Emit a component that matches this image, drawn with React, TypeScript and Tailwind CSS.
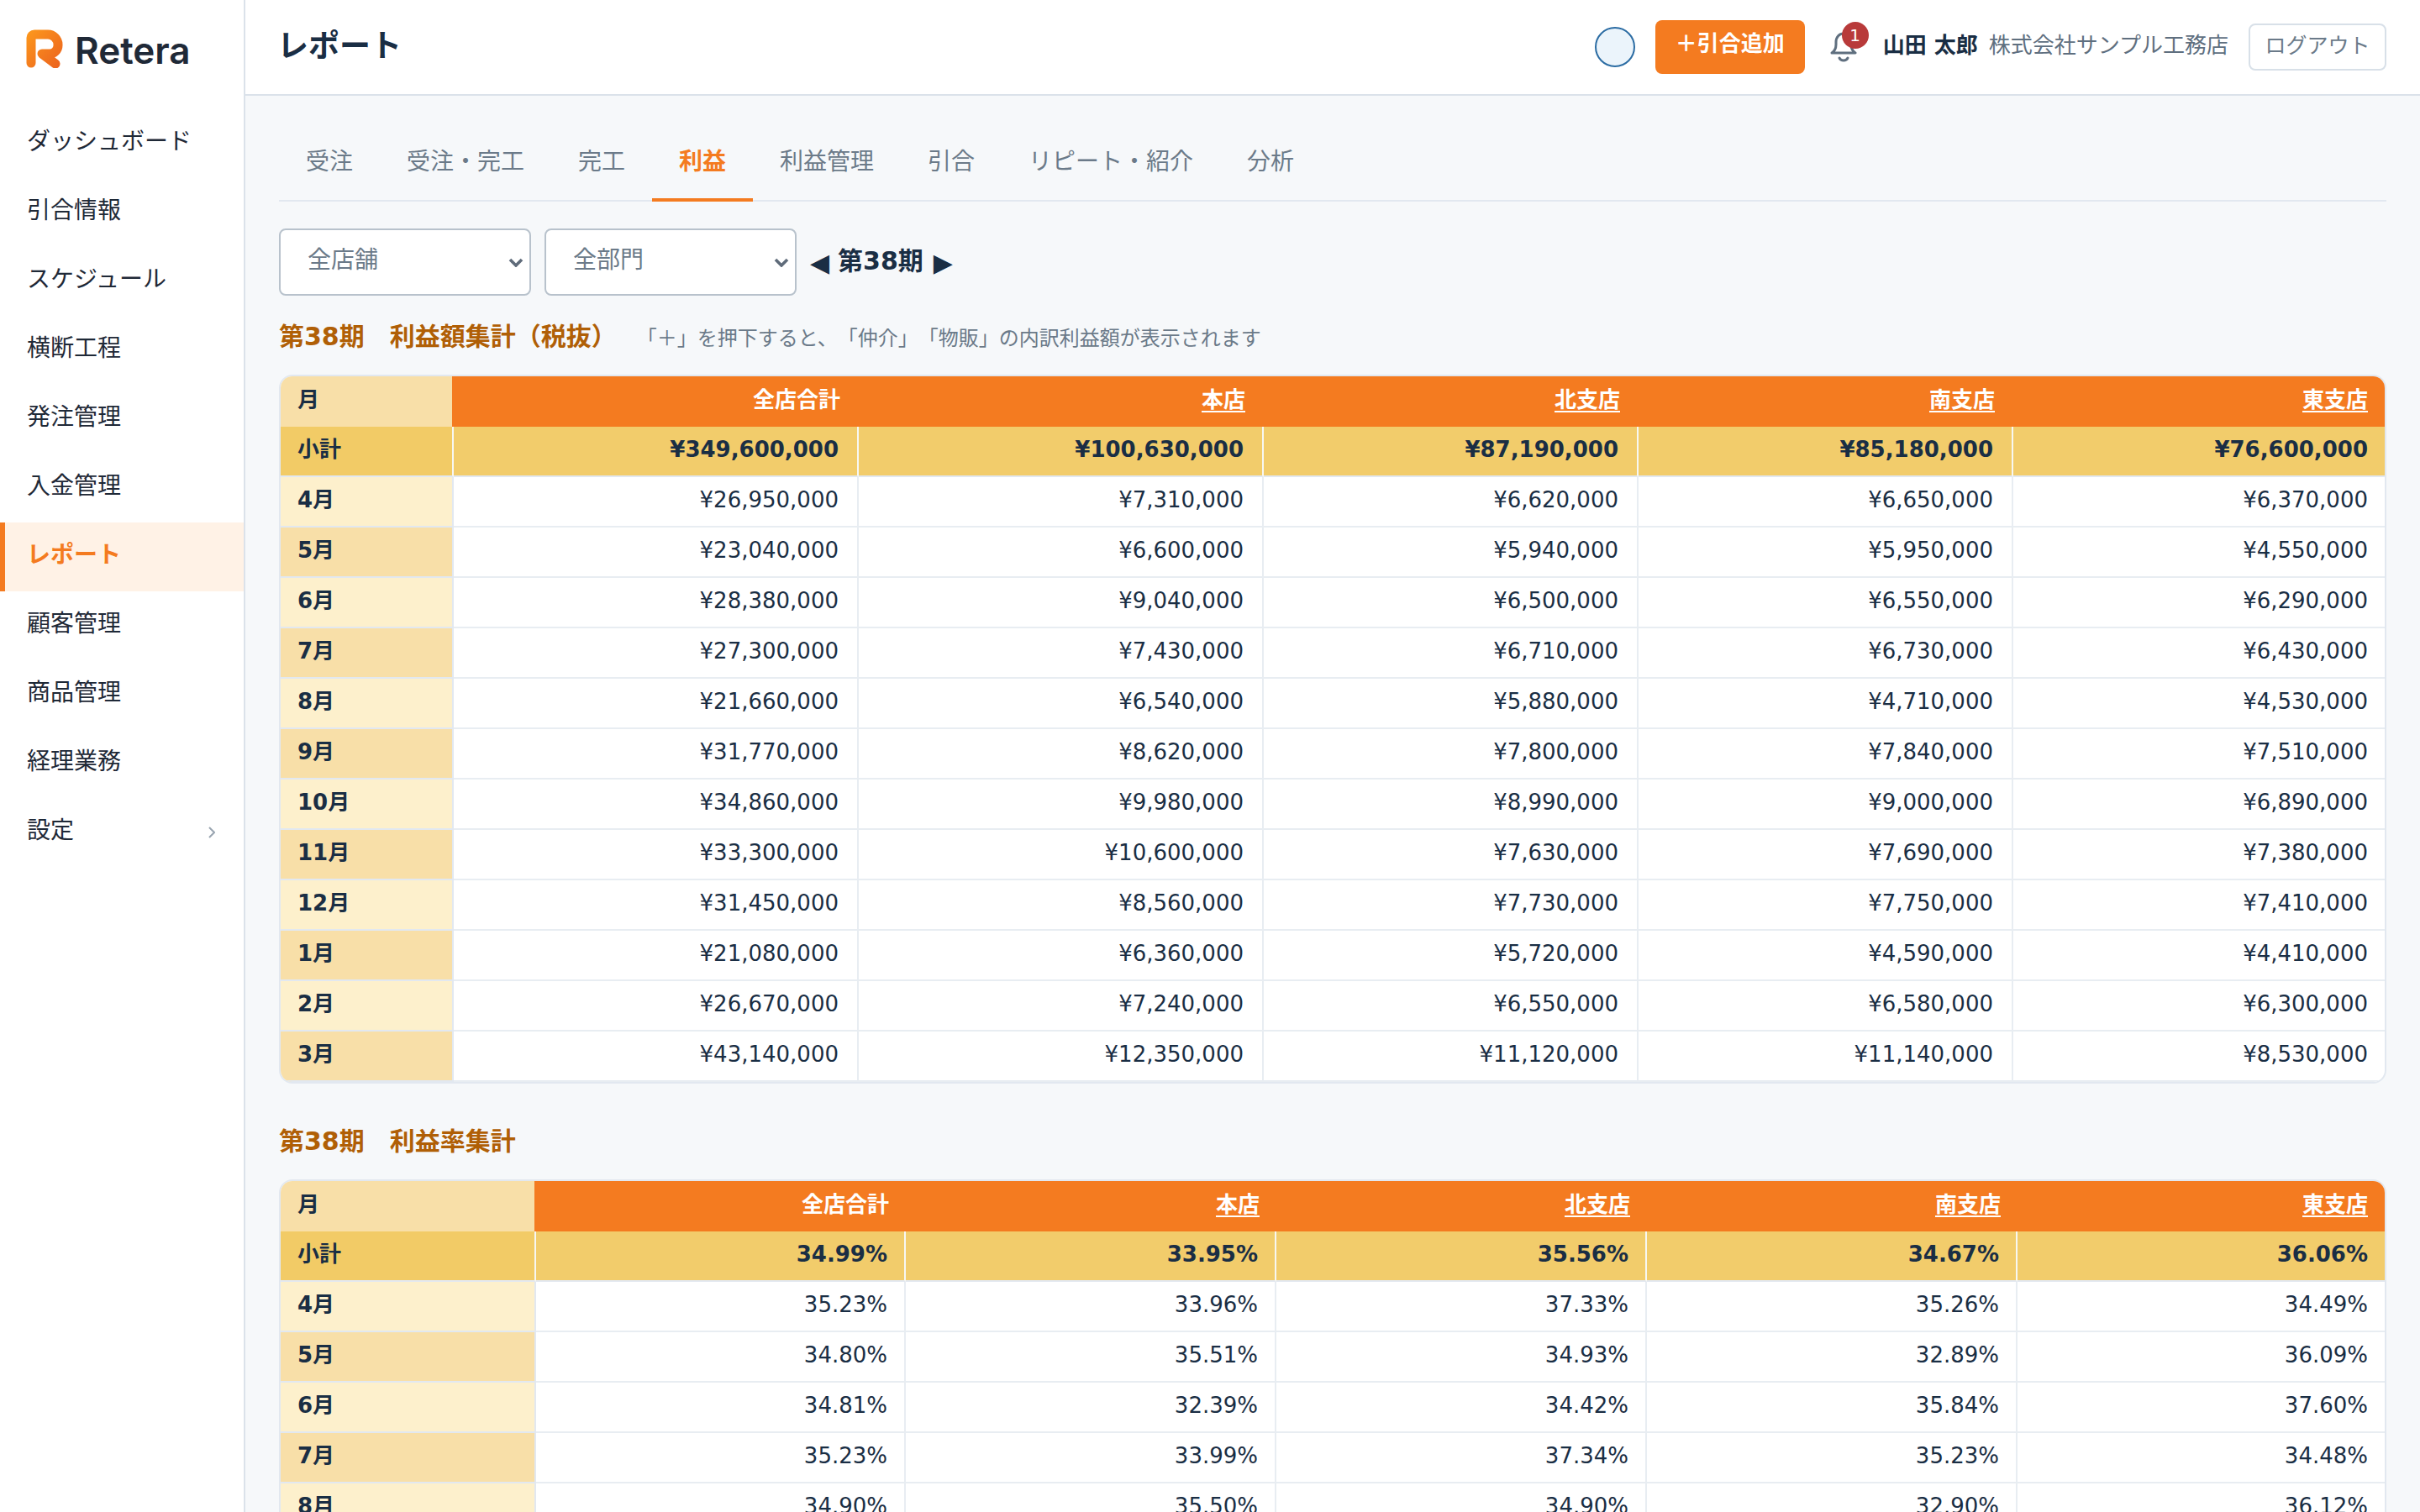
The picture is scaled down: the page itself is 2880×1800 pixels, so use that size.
import React from "react";

const navItems = ["ダッシュボード", "引合情報", "スケジュール", "横断工程", "発注管理", "入金管理", "レポート", "顧客管理", "商品管理", "経理業務", "設定"];
const tabs = ["受注", "受注・完工", "完工", "利益", "利益管理", "引合", "リピート・紹介", "分析"];
const shops = ["全店合計", "本店", "北支店", "南支店", "東支店"];

const amountTotals = ["¥349,600,000", "¥100,630,000", "¥87,190,000", "¥85,180,000", "¥76,600,000"];
const amountRows: [string, string[]][] = [
  ["4月", ["¥26,950,000", "¥7,310,000", "¥6,620,000", "¥6,650,000", "¥6,370,000"]],
  ["5月", ["¥23,040,000", "¥6,600,000", "¥5,940,000", "¥5,950,000", "¥4,550,000"]],
  ["6月", ["¥28,380,000", "¥9,040,000", "¥6,500,000", "¥6,550,000", "¥6,290,000"]],
  ["7月", ["¥27,300,000", "¥7,430,000", "¥6,710,000", "¥6,730,000", "¥6,430,000"]],
  ["8月", ["¥21,660,000", "¥6,540,000", "¥5,880,000", "¥4,710,000", "¥4,530,000"]],
  ["9月", ["¥31,770,000", "¥8,620,000", "¥7,800,000", "¥7,840,000", "¥7,510,000"]],
  ["10月", ["¥34,860,000", "¥9,980,000", "¥8,990,000", "¥9,000,000", "¥6,890,000"]],
  ["11月", ["¥33,300,000", "¥10,600,000", "¥7,630,000", "¥7,690,000", "¥7,380,000"]],
  ["12月", ["¥31,450,000", "¥8,560,000", "¥7,730,000", "¥7,750,000", "¥7,410,000"]],
  ["1月", ["¥21,080,000", "¥6,360,000", "¥5,720,000", "¥4,590,000", "¥4,410,000"]],
  ["2月", ["¥26,670,000", "¥7,240,000", "¥6,550,000", "¥6,580,000", "¥6,300,000"]],
  ["3月", ["¥43,140,000", "¥12,350,000", "¥11,120,000", "¥11,140,000", "¥8,530,000"]],
];

const rateTotals = ["34.99%", "33.95%", "35.56%", "34.67%", "36.06%"];
const rateRows: [string, string[]][] = [
  ["4月", ["35.23%", "33.96%", "37.33%", "35.26%", "34.49%"]],
  ["5月", ["34.80%", "35.51%", "34.93%", "32.89%", "36.09%"]],
  ["6月", ["34.81%", "32.39%", "34.42%", "35.84%", "37.60%"]],
  ["7月", ["35.23%", "33.99%", "37.34%", "35.23%", "34.48%"]],
  ["8月", ["34.90%", "35.50%", "34.90%", "32.90%", "36.12%"]],
];

const LogoMark = () => (
  <svg width="44" height="46" viewBox="0 0 44 46" fill="none">
    <defs>
      <linearGradient id="logoGrad" x1="0" y1="0" x2="44" y2="40" gradientUnits="userSpaceOnUse">
        <stop offset="0" stopColor="#fd9a1c" />
        <stop offset="1" stopColor="#ec641f" />
      </linearGradient>
    </defs>
    <path d="M6 40V10a4 4 0 0 1 4-4h16a12 12 0 0 1 12 12v1a10 10 0 0 1-10 10H19l16 12" stroke="url(#logoGrad)" strokeWidth="11" strokeLinecap="round" strokeLinejoin="round" />
  </svg>
);

const BellIcon = () => (
  <svg width="32" height="38" viewBox="0 0 32 38" fill="none" stroke="#5f6f7f" strokeWidth="3">
    <path d="M2 26c3-2 5-5 5-10v-3C7 7 11 3 16 3s9 4 9 10v3c0 5 2 8 5 10z" strokeLinejoin="round" />
    <path d="M11 32c1 2 3 3 5 3s4-1 5-3" strokeLinecap="round" />
  </svg>
);

const StoreSelect = ({ label }: { label: string }) => (
  <div className="relative w-[300px] h-20">
    <select className="w-full h-full appearance-none rounded-lg border-2 border-[#b8c2cc] bg-white pl-8 pb-1 text-[28px] text-[#6b7a89]">
      <option>{label}</option>
    </select>
    <svg className="absolute right-[9px] top-[35px]" width="18" height="11" viewBox="0 0 18 11" fill="none" stroke="#5f6b7a" strokeWidth="3.6">
      <path d="M2 2l7 7 7-7" />
    </svg>
  </div>
);

interface ReportTableProps {
  colClasses: string[];
  padClass: string;
  totals: string[];
  rows: [string, string[]][];
}

const ReportTable = ({ colClasses, padClass, totals, rows }: ReportTableProps) => (
  <div className="rounded-2xl border-2 border-[#e2e8f0] overflow-hidden bg-white">
    <table className="w-full table-fixed border-separate border-spacing-0 text-[26px] text-[#1a2e44]">
      <colgroup>
        {colClasses.map((c, i) => (
          <col key={i} className={c} />
        ))}
      </colgroup>
      <thead>
        <tr className="h-[60px]">
          <th className="bg-[#f8dfa8] text-left font-bold pl-5 pb-1 border-r-2 border-[#f47b20]">月</th>
          {shops.map((s, i) => (
            <th key={s} className={`bg-[#f47b20] text-white text-right font-bold pb-1 ${i < 4 ? padClass : "pr-5"} ${i > 0 ? "underline underline-offset-4" : ""}`}>
              {s}
            </th>
          ))}
        </tr>
      </thead>
      <tbody>
        <tr className="h-[60px]">
          <td className="bg-[#f2cb66] font-bold pl-5 pb-1 border-b-2 border-b-[#e2e8f0] border-r-2 border-r-[#f7f7f2]">小計</td>
          {totals.map((v, i) => (
            <td key={i} className={`bg-[#f2cc6b] text-right font-bold pb-1 border-b-2 border-b-[#e2e8f0] ${i < 4 ? `${padClass} border-r-2 border-r-[#f7f7f2]` : "pr-5"}`}>
              {v}
            </td>
          ))}
        </tr>
        {rows.map(([month, values], r) => (
          <tr key={month} className="h-[60px]">
            <td className={`font-bold pl-5 pb-1 border-b-2 border-r-2 border-[#e2e8f0] ${r % 2 === 0 ? "bg-[#fdf0cc]" : "bg-[#f8dfa8]"}`}>{month}</td>
            {values.map((v, i) => (
              <td key={i} className={`text-right pb-1 border-b-2 border-[#e8edf2] ${i < 4 ? `${padClass} border-r-2` : "pr-5"}`}>
                {v}
              </td>
            ))}
          </tr>
        ))}
      </tbody>
    </table>
  </div>
);

const App = () => {
  return (
    <div className="flex h-screen overflow-hidden bg-[#f6f8fa] font-['DejaVu_Sans','Noto_Sans_CJK_JP',sans-serif] text-[#1a2e44]">
      {/* Sidebar */}
      <aside className="w-[292px] shrink-0 bg-white border-r-2 border-[#dbe2ea]">
        <div className="h-[130px] pl-[31px] pt-[35px] flex items-start gap-[14px]">
          <LogoMark />
          <span className="font-['Inter',sans-serif] font-semibold text-[44px] leading-[50px] text-[#1f2937]">Retera</span>
        </div>
        <nav className="flex flex-col">
          {navItems.map((item) => {
            const active = item === "レポート";
            return (
              <div
                key={item}
                className={`h-[82px] flex items-center justify-between pr-[34px] text-[28px] ${active ? "bg-[#fff2e6] border-l-[6px] border-[#f47b20] pl-[26px] font-bold text-[#f47b20]" : "pl-8 text-[#1f2937]"}`}
              >
                <span className="pb-1">{item}</span>
                {item === "設定" && (
                  <svg width="8" height="16" viewBox="0 0 8 16" fill="none" stroke="#9aa5b1" strokeWidth="2">
                    <path d="M1 2l6 6-6 6" />
                  </svg>
                )}
              </div>
            );
          })}
        </nav>
      </aside>

      <div className="flex-1 min-w-0 flex flex-col">
        {/* Header */}
        <header className="h-[114px] shrink-0 bg-white border-b-2 border-[#dbe2ea] flex items-center justify-between px-10">
          <h1 className="-ml-[2px] text-[37px] font-bold">レポート</h1>
          <div className="flex items-center">
            <div className="w-12 h-12 rounded-full bg-[#ebf4fb] border-2 border-[#2b6ca3]" />
            <button className="ml-6 h-16 w-[178px] rounded-lg bg-[#f47b20] text-white font-bold text-[26px] pb-2">＋引合追加</button>
            <div className="relative ml-[30px] w-[32px] h-[38px]">
              <BellIcon />
              <span className="absolute -top-[11px] left-[14px] w-8 h-8 rounded-full bg-[#b83a3a] text-white text-[20px] flex items-center justify-center">1</span>
            </div>
            <span className="ml-[31px] font-bold text-[26px] pb-1">山田 太郎</span>
            <span className="ml-[13px] text-[26px] text-[#5f6f7f] pb-1">株式会社サンプル工務店</span>
            <button className="ml-6 w-[164px] h-14 rounded-lg border-2 border-[#d8e0e8] bg-white text-[25px] text-[#6b7a89] pb-[2px]">ログアウト</button>
          </div>
        </header>

        {/* Main */}
        <main className="flex-1 min-h-0 overflow-hidden px-10 pt-10">
          <div className="flex h-[86px] border-b-2 border-[#e2e8f0]">
            {tabs.map((t) => (
              <div key={t} className={`h-[86px] px-8 flex items-center text-[28px] ${t === "利益" ? "border-b-4 border-[#f47b20] text-[#f47b20] font-bold" : "text-[#6b7a89]"}`}>
                <span className={t === "利益" ? "pb-1" : "pb-2"}>{t}</span>
              </div>
            ))}
          </div>

          <div className="mt-8 flex items-center gap-4">
            <StoreSelect label="全店舗" />
            <StoreSelect label="全部門" />
            <div className="flex items-center gap-[10px] text-[30px] font-bold">
              <span>◀</span>
              <span className="mb-1">第38期</span>
              <span className="ml-[2px]">▶</span>
            </div>
          </div>

          <div className="mt-[26px] mb-[28px] flex items-baseline h-10">
            <h2 className="text-[30px] font-bold text-[#b05f06]">第38期　利益額集計（税抜）</h2>
            <span className="ml-6 text-[24px] text-[#6b7a89] [text-spacing-trim:space-all]">「＋」を押下すると、「仲介」「物販」の内訳利益額が表示されます</span>
          </div>
          <ReportTable
            colClasses={["w-[206px]", "w-[482px]", "w-[482px]", "w-[446px]", "w-[446px]", "w-[442px]"]}
            padClass="pr-[22px]"
            totals={amountTotals}
            rows={amountRows}
          />

          <h2 className="mt-[46px] mb-[28px] h-10 text-[30px] font-bold text-[#b05f06]">第38期　利益率集計</h2>
          <ReportTable
            colClasses={["w-[304px]", "w-[440px]", "w-[441px]", "w-[441px]", "w-[441px]", "w-[437px]"]}
            padClass="pr-5"
            totals={rateTotals}
            rows={rateRows}
          />
        </main>
      </div>
    </div>
  );
};

export default App;
